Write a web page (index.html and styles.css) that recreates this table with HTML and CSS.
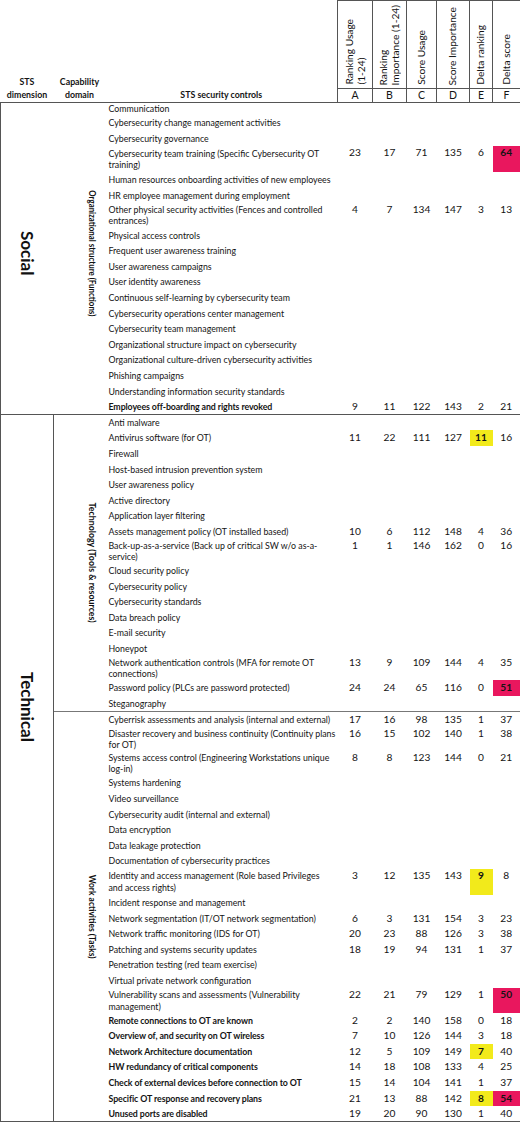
FILE: index.html
```html
<!DOCTYPE html>
<html lang="en">
<head>
  <meta charset="UTF-8" />
  <meta name="viewport" content="width=device-width, initial-scale=1.0"/>
  <title>STS security controls</title>
  <link rel="stylesheet" href="styles.css">
</head>
<body>

  <table class="sheet">
    <colgroup>
      <col class="c-dim"><col class="c-dom"><col class="c-ctl">
      <col class="c-a"><col class="c-b"><col class="c-c"><col class="c-d"><col class="c-e"><col class="c-f">
    </colgroup>
    <thead>
      <tr class="h-top">
        <th rowspan="2" class="h-left">STS<br>dimension</th>
        <th rowspan="2" class="h-left">Capability<br>domain</th>
        <th rowspan="2" class="h-left">STS security controls</th>
        <th class="rot"><span>Ranking Usage<br>(1-24)</span></th>
        <th class="rot"><span>Ranking<br>Importance (1-24)</span></th>
        <th class="rot"><span>Score Usage</span></th>
        <th class="rot"><span>Score Importance</span></th>
        <th class="rot"><span>Delta ranking</span></th>
        <th class="rot"><span>Delta score</span></th>
      </tr>
      <tr class="h-letters">
        <th>A</th><th>B</th><th>C</th><th>D</th><th>E</th><th>F</th>
      </tr>
    </thead>

    <tbody class="social">
      <tr class="first">
        <td rowspan="19" class="dim"><span>Social</span></td>
        <td rowspan="19" class="dom"><span>Organizational structure (Functions)</span></td>
        <td class="ctl">Communication</td><td colspan="6"></td>
      </tr>
      <tr><td class="ctl">Cybersecurity change management activities</td><td colspan="6"></td></tr>
      <tr><td class="ctl">Cybersecurity governance</td><td colspan="6"></td></tr>
      <tr class="two tall"><td class="ctl">Cybersecurity team training (Specific Cybersecurity OT<br>training)</td><td>23</td><td>17</td><td>71</td><td>135</td><td>6</td><td class="hp">64</td></tr>
      <tr><td class="ctl">Human resources onboarding activities of new employees</td><td colspan="6"></td></tr>
      <tr><td class="ctl">HR employee management during employment</td><td colspan="6"></td></tr>
      <tr class="two"><td class="ctl">Other physical security activities (Fences and controlled<br>entrances)</td><td>4</td><td>7</td><td>134</td><td>147</td><td>3</td><td>13</td></tr>
      <tr><td class="ctl">Physical access controls</td><td colspan="6"></td></tr>
      <tr><td class="ctl">Frequent user awareness training</td><td colspan="6"></td></tr>
      <tr><td class="ctl">User awareness campaigns</td><td colspan="6"></td></tr>
      <tr><td class="ctl">User identity awareness</td><td colspan="6"></td></tr>
      <tr><td class="ctl">Continuous self-learning by cybersecurity team</td><td colspan="6"></td></tr>
      <tr><td class="ctl">Cybersecurity operations center management</td><td colspan="6"></td></tr>
      <tr><td class="ctl">Cybersecurity team management</td><td colspan="6"></td></tr>
      <tr><td class="ctl">Organizational structure impact on cybersecurity</td><td colspan="6"></td></tr>
      <tr><td class="ctl">Organizational culture-driven cybersecurity activities</td><td colspan="6"></td></tr>
      <tr><td class="ctl">Phishing campaigns</td><td colspan="6"></td></tr>
      <tr><td class="ctl">Understanding information security standards</td><td colspan="6"></td></tr>
      <tr><td class="ctl"><b>Employees off-boarding and rights revoked</b></td><td>9</td><td>11</td><td>122</td><td>143</td><td>2</td><td>21</td></tr>
    </tbody>

    <tbody class="tech">
      <tr>
        <td rowspan="42" class="dim"><span>Technical</span></td>
        <td rowspan="18" class="dom tools"><span>Technology (Tools &amp; resources)</span></td>
        <td class="ctl">Anti malware</td><td colspan="6"></td>
      </tr>
      <tr><td class="ctl">Antivirus software (for OT)</td><td>11</td><td>22</td><td>111</td><td>127</td><td class="hy">11</td><td>16</td></tr>
      <tr><td class="ctl">Firewall</td><td colspan="6"></td></tr>
      <tr><td class="ctl">Host-based intrusion prevention system</td><td colspan="6"></td></tr>
      <tr><td class="ctl">User awareness policy</td><td colspan="6"></td></tr>
      <tr><td class="ctl">Active directory</td><td colspan="6"></td></tr>
      <tr><td class="ctl">Application layer filtering</td><td colspan="6"></td></tr>
      <tr><td class="ctl">Assets management policy (OT installed based)</td><td>10</td><td>6</td><td>112</td><td>148</td><td>4</td><td>36</td></tr>
      <tr class="two short"><td class="ctl">Back-up-as-a-service (Back up of critical SW w/o as-a-<br>service)</td><td>1</td><td>1</td><td>146</td><td>162</td><td>0</td><td>16</td></tr>
      <tr><td class="ctl">Cloud security policy</td><td colspan="6"></td></tr>
      <tr><td class="ctl">Cybersecurity policy</td><td colspan="6"></td></tr>
      <tr><td class="ctl">Cybersecurity standards</td><td colspan="6"></td></tr>
      <tr><td class="ctl">Data breach policy</td><td colspan="6"></td></tr>
      <tr><td class="ctl">E-mail security</td><td colspan="6"></td></tr>
      <tr><td class="ctl">Honeypot</td><td colspan="6"></td></tr>
      <tr class="two short"><td class="ctl">Network authentication controls (MFA for remote OT<br>connections)</td><td>13</td><td>9</td><td>109</td><td>144</td><td>4</td><td>35</td></tr>
      <tr><td class="ctl">Password policy (PLCs are password protected)</td><td>24</td><td>24</td><td>65</td><td>116</td><td>0</td><td class="hp">51</td></tr>
      <tr><td class="ctl">Steganography</td><td colspan="6"></td></tr>

      <tr class="sep">
        <td rowspan="24" class="dom tasks"><span>Work activities (Tasks)</span></td>
        <td class="ctl">Cyberrisk assessments and analysis (internal and external)</td><td>17</td><td>16</td><td>98</td><td>135</td><td>1</td><td>37</td>
      </tr>
      <tr class="two"><td class="ctl">Disaster recovery and business continuity (Continuity plans<br>for OT)</td><td>16</td><td>15</td><td>102</td><td>140</td><td>1</td><td>38</td></tr>
      <tr class="two"><td class="ctl">Systems access control (Engineering Workstations unique<br>log-in)</td><td>8</td><td>8</td><td>123</td><td>144</td><td>0</td><td>21</td></tr>
      <tr><td class="ctl">Systems hardening</td><td colspan="6"></td></tr>
      <tr><td class="ctl">Video surveillance</td><td colspan="6"></td></tr>
      <tr><td class="ctl">Cybersecurity audit (internal and external)</td><td colspan="6"></td></tr>
      <tr><td class="ctl">Data encryption</td><td colspan="6"></td></tr>
      <tr><td class="ctl">Data leakage protection</td><td colspan="6"></td></tr>
      <tr><td class="ctl">Documentation of cybersecurity practices</td><td colspan="6"></td></tr>
      <tr class="two tall"><td class="ctl">Identity and access management (Role based Privileges<br>and access rights)</td><td>3</td><td>12</td><td>135</td><td>143</td><td class="hy">9</td><td>8</td></tr>
      <tr><td class="ctl">Incident response and management</td><td colspan="6"></td></tr>
      <tr><td class="ctl">Network segmentation (IT/OT network segmentation)</td><td>6</td><td>3</td><td>131</td><td>154</td><td>3</td><td>23</td></tr>
      <tr><td class="ctl">Network traffic monitoring (IDS for OT)</td><td>20</td><td>23</td><td>88</td><td>126</td><td>3</td><td>38</td></tr>
      <tr><td class="ctl">Patching and systems security updates</td><td>18</td><td>19</td><td>94</td><td>131</td><td>1</td><td>37</td></tr>
      <tr><td class="ctl">Penetration testing (red team exercise)</td><td colspan="6"></td></tr>
      <tr><td class="ctl">Virtual private network configuration</td><td colspan="6"></td></tr>
      <tr class="two"><td class="ctl">Vulnerability scans and assessments (Vulnerability<br>management)</td><td>22</td><td>21</td><td>79</td><td>129</td><td>1</td><td class="hp">50</td></tr>
      <tr><td class="ctl"><b>Remote connections to OT are known</b></td><td>2</td><td>2</td><td>140</td><td>158</td><td>0</td><td>18</td></tr>
      <tr><td class="ctl"><b>Overview of, and security on OT wireless</b></td><td>7</td><td>10</td><td>126</td><td>144</td><td>3</td><td>18</td></tr>
      <tr><td class="ctl"><b>Network Architecture documentation</b></td><td>12</td><td>5</td><td>109</td><td>149</td><td class="hy">7</td><td>40</td></tr>
      <tr><td class="ctl"><b>HW redundancy of critical components</b></td><td>14</td><td>18</td><td>108</td><td>133</td><td>4</td><td>25</td></tr>
      <tr><td class="ctl"><b>Check of external devices before connection to OT</b></td><td>15</td><td>14</td><td>104</td><td>141</td><td>1</td><td>37</td></tr>
      <tr><td class="ctl"><b>Specific OT response and recovery plans</b></td><td>21</td><td>13</td><td>88</td><td>142</td><td class="hy">8</td><td class="hp">54</td></tr>
      <tr><td class="ctl"><b>Unused ports are disabled</b></td><td>19</td><td>20</td><td>90</td><td>130</td><td>1</td><td>40</td></tr>
    </tbody>
  </table>

</body>
</html>
```

FILE: styles.css
```css
* {
  box-sizing: border-box;
}

body {
  margin: 0;
  background: #fff;
  font-family: Lato, 'Liberation Sans', sans-serif;
  color: #141414;
}

.sheet {
  width: 520px;
  table-layout: fixed;
  border-collapse: collapse;
}

.c-dim { width: 53px; }
.c-dom { width: 52px; }
.c-ctl { width: 232px; }
.c-a { width: 35px; }
.c-b { width: 34px; }
.c-c { width: 30px; }
.c-d { width: 33px; }
.c-e { width: 23px; }
.c-f { width: 28px; }

th,
td {
  padding: 0;
  font-weight: normal;
  line-height: 11.5px;
}

/* header */

.h-top {
  height: 88px;
}

.h-letters {
  height: 14px;
}

.h-left {
  vertical-align: bottom;
  text-align: center;
  font-size: 8.8px;
  font-weight: bold;
  line-height: 12.5px;
  padding-bottom: 1px;
}

.rot {
  border: 1px solid #555;
  vertical-align: bottom;
  text-align: center;
  padding-bottom: 3px;
}

.rot span {
  display: inline-block;
  writing-mode: vertical-rl;
  transform: rotate(180deg);
  text-align: start;
  white-space: nowrap;
  font-size: 10.2px;
  line-height: 11.5px;
}

.h-letters th {
  border-left: 1px solid #555;
  border-right: 1px solid #555;
  font-size: 10.5px;
  text-align: center;
  vertical-align: middle;
}

/* body */

.social,
.tech {
  border: 1px solid #555;
}

tbody tr {
  height: 15.6px;
}

tbody tr.first {
  height: 12.5px;
}

tbody tr.two {
  height: 24.2px;
}

tbody tr.tall {
  height: 26px;
}

tbody tr.short {
  height: 23.6px;
}

tr.sep td {
  border-top: 1px solid #777;
}

td {
  text-align: center;
  vertical-align: middle;
  font-size: 10.2px;
}

tr.two td {
  vertical-align: top;
  padding-top: 0.6px;
}

td.ctl,
tr.two td.ctl {
  text-align: left;
  vertical-align: middle;
  padding: 0 0 0 3px;
  font-size: 8.8px;
  white-space: nowrap;
}

td.ctl b {
  letter-spacing: -0.1px;
}

.dim {
  text-align: center;
  vertical-align: middle;
}

.dim span {
  display: inline-block;
  vertical-align: middle;
  writing-mode: vertical-rl;
  font-size: 17px;
  font-weight: bold;
  line-height: 20px;
  color: #111;
}

.social .dim,
.social .dom {
  padding-bottom: 10px;
}

.tech .dim {
  border-right: 1px solid #555;
  padding-bottom: 122px;
}

.dom {
  text-align: right;
  vertical-align: middle;
  padding-right: 8px;
}

.dom span {
  display: inline-block;
  vertical-align: middle;
  writing-mode: vertical-rl;
  transform: scaleY(0.86);
  font-size: 9.2px;
  font-weight: bold;
  line-height: 11px;
  color: #111;
}

.dom.tools span {
  transform: scaleY(0.96);
}

.dom.tasks span {
  transform: scaleY(0.92);
}

.hy {
  background: #f2ea1b;
  font-weight: bold;
}

.hp {
  background: #e9175e;
  font-weight: bold;
}
```
